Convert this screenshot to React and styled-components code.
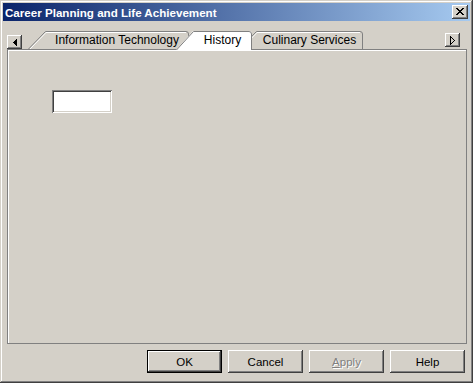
import React from "react";
import styled, { createGlobalStyle } from "styled-components";

const GlobalStyle = createGlobalStyle`
  html, body {
    margin: 0;
    padding: 0;
    background: #d4d0c8;
  }
  * {
    box-sizing: border-box;
  }
`;

const FACE = "#d4d0c8";

const Window = styled.div`
  width: 473px;
  height: 383px;
  padding: 3px;
  background: ${FACE};
  display: flex;
  flex-direction: column;
  font-family: "Liberation Sans", Arial, sans-serif;
  font-size: 11px;
  color: #000;
  box-shadow: inset -1px -1px #404040, inset 1px 1px ${FACE},
    inset -2px -2px #808080, inset 2px 2px #ffffff;
`;

const TitleBar = styled.div`
  height: 18px;
  display: flex;
  align-items: center;
  padding-left: 2px;
  padding-right: 2px;
  background: linear-gradient(to right, #0a246a, #a6caf0);
`;

const TitleText = styled.div`
  flex: 1;
  color: #fff;
  font-weight: bold;
  font-size: 11.6px;
  white-space: nowrap;
`;

const raised = `
  box-shadow: inset -1px -1px #404040, inset 1px 1px #ffffff,
    inset -2px -2px #808080, inset 2px 2px ${FACE};
`;

const CloseButton = styled.div`
  width: 16px;
  height: 14px;
  background: ${FACE};
  display: flex;
  align-items: center;
  justify-content: center;
  padding-bottom: 1px;
  ${raised}
`;

const Body = styled.div`
  flex: 1;
  display: flex;
  flex-direction: column;
  padding: 10px 3px 7px 4px;
`;

const TabStrip = styled.div`
  height: 18px;
  display: flex;
  align-items: flex-end;
`;

const ScrollButton = styled.div`
  width: 15px;
  height: 14px;
  margin-bottom: ${(p) => p.$drop}px;
  margin-left: ${(p) => (p.$right ? "auto" : "0")};
  margin-right: ${(p) => (p.$right ? "7px" : "6px")};
  background: ${FACE};
  display: flex;
  align-items: center;
  justify-content: center;
  ${raised}
`;

const TabList = styled.div`
  display: flex;
  align-items: flex-end;
`;

const TabItem = styled.div`
  position: relative;
  z-index: ${(p) => (p.$selected ? 2 : 1)};
  width: ${(p) => p.$width}px;
  height: ${(p) => (p.$selected ? 19 : 18)}px;
  margin-left: ${(p) => (p.$first ? 0 : -13)}px;
  margin-bottom: ${(p) => (p.$selected ? -1 : 0)}px;
  padding-left: 17px;
  padding-bottom: ${(p) => (p.$selected ? 1 : 0)}px;
  display: flex;
  align-items: center;
  justify-content: center;
  font-size: 12px;
  white-space: nowrap;

  & > svg {
    position: absolute;
    left: 0;
    top: 0;
  }
`;

const TabLabel = styled.span`
  position: relative;
`;

const Panel = styled.div`
  flex: 1;
  border: 1px solid #808080;
  box-shadow: inset 1px 1px #ffffff;
  padding: 40px 0 0 44px;
`;

const TextField = styled.div`
  width: 60px;
  height: 23px;
  background: #fff;
  box-shadow: inset 1px 1px #808080, inset -1px -1px #ffffff,
    inset 2px 2px #404040, inset -2px -2px ${FACE};
`;

const ButtonRow = styled.div`
  display: flex;
  justify-content: flex-end;
  gap: 6px;
  margin-top: 6px;
  padding-right: 2px;
`;

const DialogButton = styled.div`
  width: 75px;
  height: 23px;
  display: flex;
  align-items: center;
  justify-content: center;
  background: ${FACE};
  font-size: 11.5px;
  color: ${(p) => (p.$disabled ? "#808080" : "#000")};
  text-shadow: ${(p) => (p.$disabled ? "1px 1px #ffffff" : "none")};
  border: ${(p) => (p.$default ? "1px solid #000" : "none")};
  ${raised}

  u {
    text-decoration: underline;
  }
`;

function PixelGlyph({ rows, color = "#000" }) {
  const w = rows[0].length;
  const h = rows.length;
  return (
    <svg width={w} height={h} viewBox={`0 0 ${w} ${h}`} shapeRendering="crispEdges">
      {rows.map((row, y) =>
        row.split("").map((c, x) =>
          c === "X" ? <rect key={`${x}-${y}`} x={x} y={y} width="1" height="1" fill={color} /> : null
        )
      )}
    </svg>
  );
}

const closeGlyph = [
  "XX....XX",
  ".XX..XX.",
  "..XXXX..",
  "...XX...",
  "..XXXX..",
  ".XX..XX.",
  "XX....XX",
];

const leftGlyph = [
  "...X",
  "..XX",
  ".XXX",
  "XXXX",
  ".XXX",
  "..XX",
  "...X",
];

const rightGlyph = [
  "X....",
  "XX...",
  "X.X..",
  "X..X.",
  "X...X",
  "X..X.",
  "X.X..",
  "XX...",
  "X....",
];

function TabShape({ width, selected }) {
  const h = selected ? 19 : 18;
  const s = 17;
  const w = width;
  const outline = `M0.5 ${h} L${s + 0.5} 0.5 L${w - 3} 0.5 Q${w - 0.5} 0.5 ${w - 0.5} 3 L${w - 0.5} ${h}`;
  const fill = `M0 ${h} L${s} 0 L${w - 3} 0 Q${w} 0 ${w} 3 L${w} ${h} Z`;
  const inner = `M2 ${h - (selected ? 1 : 0)} L${s + 1} 1.5 L${w - 3} 1.5`;
  return (
    <svg width={w} height={h} viewBox={`0 0 ${w} ${h}`}>
      <path d={fill} fill={selected ? "#ffffff" : FACE} />
      {!selected && <path d={inner} fill="none" stroke="#ffffff" strokeWidth="1" />}
      <path d={outline} fill="none" stroke="#808080" strokeWidth="1" />
    </svg>
  );
}

const tabs = [
  { label: "Information Technology", width: 161 },
  { label: "History", width: 76, selected: true },
  { label: "Culinary Services", width: 124 },
];

export default function App() {
  return (
    <>
      <GlobalStyle />
      <Window>
        <TitleBar>
          <TitleText>Career Planning and Life Achievement</TitleText>
          <CloseButton>
            <PixelGlyph rows={closeGlyph} />
          </CloseButton>
        </TitleBar>
        <Body>
          <TabStrip>
            <ScrollButton $drop={0}>
              <PixelGlyph rows={leftGlyph} />
            </ScrollButton>
            <TabList>
              {tabs.map((t, i) => (
                <TabItem key={t.label} $width={t.width} $selected={t.selected} $first={i === 0}>
                  <TabShape width={t.width} selected={t.selected} />
                  <TabLabel>{t.label}</TabLabel>
                </TabItem>
              ))}
            </TabList>
            <ScrollButton $right $drop={2}>
              <PixelGlyph rows={rightGlyph} />
            </ScrollButton>
          </TabStrip>
          <Panel>
            <TextField />
          </Panel>
          <ButtonRow>
            <DialogButton $default>OK</DialogButton>
            <DialogButton>Cancel</DialogButton>
            <DialogButton $disabled>
              <span>
                <u>A</u>pply
              </span>
            </DialogButton>
            <DialogButton>Help</DialogButton>
          </ButtonRow>
        </Body>
      </Window>
    </>
  );
}
